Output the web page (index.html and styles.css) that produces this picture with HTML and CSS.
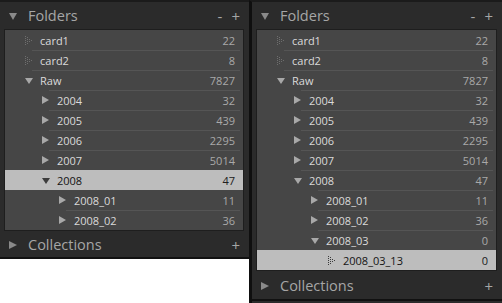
FILE: index.html
```html
<!DOCTYPE html>
<html>
<head>
<meta charset="utf-8">
<link rel="stylesheet" href="styles.css">
</head>
<body>
<div class="wrap">
  <div class="panel">
    <div class="head">
      <span class="htri down"></span><span class="htitle">Folders</span>
      <span class="hbtn minus">-</span><span class="hbtn">+</span>
    </div>
    <div class="list">
      <div class="row l0 first"><span class="ic"><svg class="dots" width="7" height="9" viewBox="0 0 7 9"><g><rect x="0" y="0" width="1" height="1"/><rect x="0" y="2" width="1" height="1"/><rect x="0" y="4" width="1" height="1"/><rect x="0" y="6" width="1" height="1"/><rect x="0" y="8" width="1" height="1"/><rect x="2" y="1" width="1" height="1"/><rect x="2" y="3" width="1" height="1"/><rect x="2" y="5" width="1" height="1"/><rect x="2" y="7" width="1" height="1"/><rect x="4" y="3" width="1" height="1"/><rect x="4" y="5" width="1" height="1"/><rect x="6" y="4" width="1" height="1"/></g></svg></span><span class="name">card1</span><span class="count">22</span></div>
      <div class="row l0"><span class="ic"><svg class="dots" width="7" height="9" viewBox="0 0 7 9"><g><rect x="0" y="0" width="1" height="1"/><rect x="0" y="2" width="1" height="1"/><rect x="0" y="4" width="1" height="1"/><rect x="0" y="6" width="1" height="1"/><rect x="0" y="8" width="1" height="1"/><rect x="2" y="1" width="1" height="1"/><rect x="2" y="3" width="1" height="1"/><rect x="2" y="5" width="1" height="1"/><rect x="2" y="7" width="1" height="1"/><rect x="4" y="3" width="1" height="1"/><rect x="4" y="5" width="1" height="1"/><rect x="6" y="4" width="1" height="1"/></g></svg></span><span class="name">card2</span><span class="count">8</span></div>
      <div class="row l0"><span class="ic"><span class="tri down"></span></span><span class="name">Raw</span><span class="count">7827</span></div>
      <div class="row l1"><span class="ic"><span class="tri right"></span></span><span class="name">2004</span><span class="count">32</span></div>
      <div class="row l1"><span class="ic"><span class="tri right"></span></span><span class="name">2005</span><span class="count">439</span></div>
      <div class="row l1"><span class="ic"><span class="tri right"></span></span><span class="name">2006</span><span class="count">2295</span></div>
      <div class="row l1"><span class="ic"><span class="tri right"></span></span><span class="name">2007</span><span class="count">5014</span></div>
      <div class="row l1 sel"><span class="ic"><span class="tri down"></span></span><span class="name">2008</span><span class="count">47</span></div>
      <div class="row l2"><span class="ic"><span class="tri right"></span></span><span class="name">2008_01</span><span class="count">11</span></div>
      <div class="row l2"><span class="ic"><span class="tri right"></span></span><span class="name">2008_02</span><span class="count">36</span></div>
    </div>
    <div class="head coll">
      <span class="htri right"></span><span class="htitle">Collections</span>
      <span class="hbtn">+</span>
    </div>
  </div>

  <div class="panel second">
    <div class="head">
      <span class="htri down"></span><span class="htitle">Folders</span>
      <span class="hbtn minus">-</span><span class="hbtn">+</span>
    </div>
    <div class="list">
      <div class="row l0 first"><span class="ic"><svg class="dots" width="7" height="9" viewBox="0 0 7 9"><g><rect x="0" y="0" width="1" height="1"/><rect x="0" y="2" width="1" height="1"/><rect x="0" y="4" width="1" height="1"/><rect x="0" y="6" width="1" height="1"/><rect x="0" y="8" width="1" height="1"/><rect x="2" y="1" width="1" height="1"/><rect x="2" y="3" width="1" height="1"/><rect x="2" y="5" width="1" height="1"/><rect x="2" y="7" width="1" height="1"/><rect x="4" y="3" width="1" height="1"/><rect x="4" y="5" width="1" height="1"/><rect x="6" y="4" width="1" height="1"/></g></svg></span><span class="name">card1</span><span class="count">22</span></div>
      <div class="row l0"><span class="ic"><svg class="dots" width="7" height="9" viewBox="0 0 7 9"><g><rect x="0" y="0" width="1" height="1"/><rect x="0" y="2" width="1" height="1"/><rect x="0" y="4" width="1" height="1"/><rect x="0" y="6" width="1" height="1"/><rect x="0" y="8" width="1" height="1"/><rect x="2" y="1" width="1" height="1"/><rect x="2" y="3" width="1" height="1"/><rect x="2" y="5" width="1" height="1"/><rect x="2" y="7" width="1" height="1"/><rect x="4" y="3" width="1" height="1"/><rect x="4" y="5" width="1" height="1"/><rect x="6" y="4" width="1" height="1"/></g></svg></span><span class="name">card2</span><span class="count">8</span></div>
      <div class="row l0"><span class="ic"><span class="tri down"></span></span><span class="name">Raw</span><span class="count">7827</span></div>
      <div class="row l1"><span class="ic"><span class="tri right"></span></span><span class="name">2004</span><span class="count">32</span></div>
      <div class="row l1"><span class="ic"><span class="tri right"></span></span><span class="name">2005</span><span class="count">439</span></div>
      <div class="row l1"><span class="ic"><span class="tri right"></span></span><span class="name">2006</span><span class="count">2295</span></div>
      <div class="row l1"><span class="ic"><span class="tri right"></span></span><span class="name">2007</span><span class="count">5014</span></div>
      <div class="row l1"><span class="ic"><span class="tri down"></span></span><span class="name">2008</span><span class="count">47</span></div>
      <div class="row l2"><span class="ic"><span class="tri right"></span></span><span class="name">2008_01</span><span class="count">11</span></div>
      <div class="row l2"><span class="ic"><span class="tri right"></span></span><span class="name">2008_02</span><span class="count">36</span></div>
      <div class="row l2"><span class="ic"><span class="tri down"></span></span><span class="name">2008_03</span><span class="count">0</span></div>
      <div class="row l3 sel"><span class="ic"><svg class="dots" width="7" height="9" viewBox="0 0 7 9"><g><rect x="0" y="0" width="1" height="1"/><rect x="0" y="2" width="1" height="1"/><rect x="0" y="4" width="1" height="1"/><rect x="0" y="6" width="1" height="1"/><rect x="0" y="8" width="1" height="1"/><rect x="2" y="1" width="1" height="1"/><rect x="2" y="3" width="1" height="1"/><rect x="2" y="5" width="1" height="1"/><rect x="2" y="7" width="1" height="1"/><rect x="4" y="3" width="1" height="1"/><rect x="4" y="5" width="1" height="1"/><rect x="6" y="4" width="1" height="1"/></g></svg></span><span class="name">2008_03_13</span><span class="count">0</span></div>
    </div>
    <div class="head coll">
      <span class="htri right"></span><span class="htitle">Collections</span>
      <span class="hbtn">+</span>
    </div>
    <div class="next"></div>
  </div>
</div>
</body>
</html>
```
FILE: styles.css
```css
html, body {
  margin: 0;
  padding: 0;
  background: #ffffff;
  overflow: hidden;
}
.wrap {
  display: flex;
  align-items: flex-start;
  width: 502px;
  height: 303px;
  overflow: hidden;
  font-family: "Open Sans", "Noto Sans", sans-serif;
}
.panel {
  flex: none;
  width: 249px;
  background: #2b2b2b;
  border-top: 2px solid #1b1b1b;
  border-bottom: 2px solid #111111;
}
.panel.second {
  width: 250px;
  border-left: 3px solid #0f0f0f;
  border-bottom: none;
}
.head {
  height: 27px;
  display: flex;
  align-items: center;
  padding: 0 9px 0 9px;
  color: #a6a6a6;
}
.head.coll {
  height: 26px;
  padding-top: 1px;
  box-sizing: border-box;
}
.panel.second .head.coll {
  height: 28px;
}
.htri {
  width: 0;
  height: 0;
  flex: none;
}
.htri.down {
  border-left: 4px solid transparent;
  border-right: 4px solid transparent;
  border-top: 7px solid #8a8a8a;
  margin-top: 2px;
}
.htri.right {
  border-top: 4px solid transparent;
  border-bottom: 4px solid transparent;
  border-left: 8px solid #8a8a8a;
  margin-top: 1px;
}
.htitle {
  font-size: 14.5px;
  margin-left: 11px;
  flex: 1;
  line-height: 20px;
}
.hbtn {
  font-size: 15px;
  line-height: 20px;
  color: #a6a6a6;
  margin-left: 9px;
}
.list {
  margin: 0 5px 0 4px;
  border: 1px solid #1e1e1e;
  background: #464646;
}
.row {
  position: relative;
  height: 20px;
  display: flex;
  align-items: center;
  padding-right: 8px;
  font-size: 11px;
  color: #dadada;
}
.row::before {
  content: "";
  position: absolute;
  top: 0;
  left: calc(var(--ind) + 7px);
  right: 3px;
  height: 1px;
  background: #555555;
}
.row.first::before,
.row.sel::before {
  display: none;
}
.row.sel + .row::before {
  display: none;
}
.l0 { --ind: 20px; }
.l1 { --ind: 37px; }
.l2 { --ind: 54px; }
.l3 { --ind: 71px; }
.ic {
  flex: none;
  width: 15px;
  margin-left: var(--ind);
  display: flex;
  align-items: center;
}
.tri {
  width: 0;
  height: 0;
}
.tri.right {
  border-top: 4px solid transparent;
  border-bottom: 4px solid transparent;
  border-left: 7px solid #a8a8a8;
}
.tri.down {
  border-left: 4px solid transparent;
  border-right: 4px solid transparent;
  border-top: 6px solid #a8a8a8;
  margin-top: 1px;
}
.dots {
  display: block;
  fill: #6e6e6e;
}
.name {
  flex: 1;
  white-space: nowrap;
}
.count {
  color: #a9a9a9;
}
.row.sel {
  background: #bdbdbd;
  color: #141414;
}
.row.sel .count {
  color: #202020;
}
.row.sel .tri.down {
  border-top-color: #3c3c3c;
}
.row.sel .dots {
  fill: #3a3a3a;
}
.next {
  border-top: 2px solid #111111;
  height: 10px;
  background: #2b2b2b;
}
```
